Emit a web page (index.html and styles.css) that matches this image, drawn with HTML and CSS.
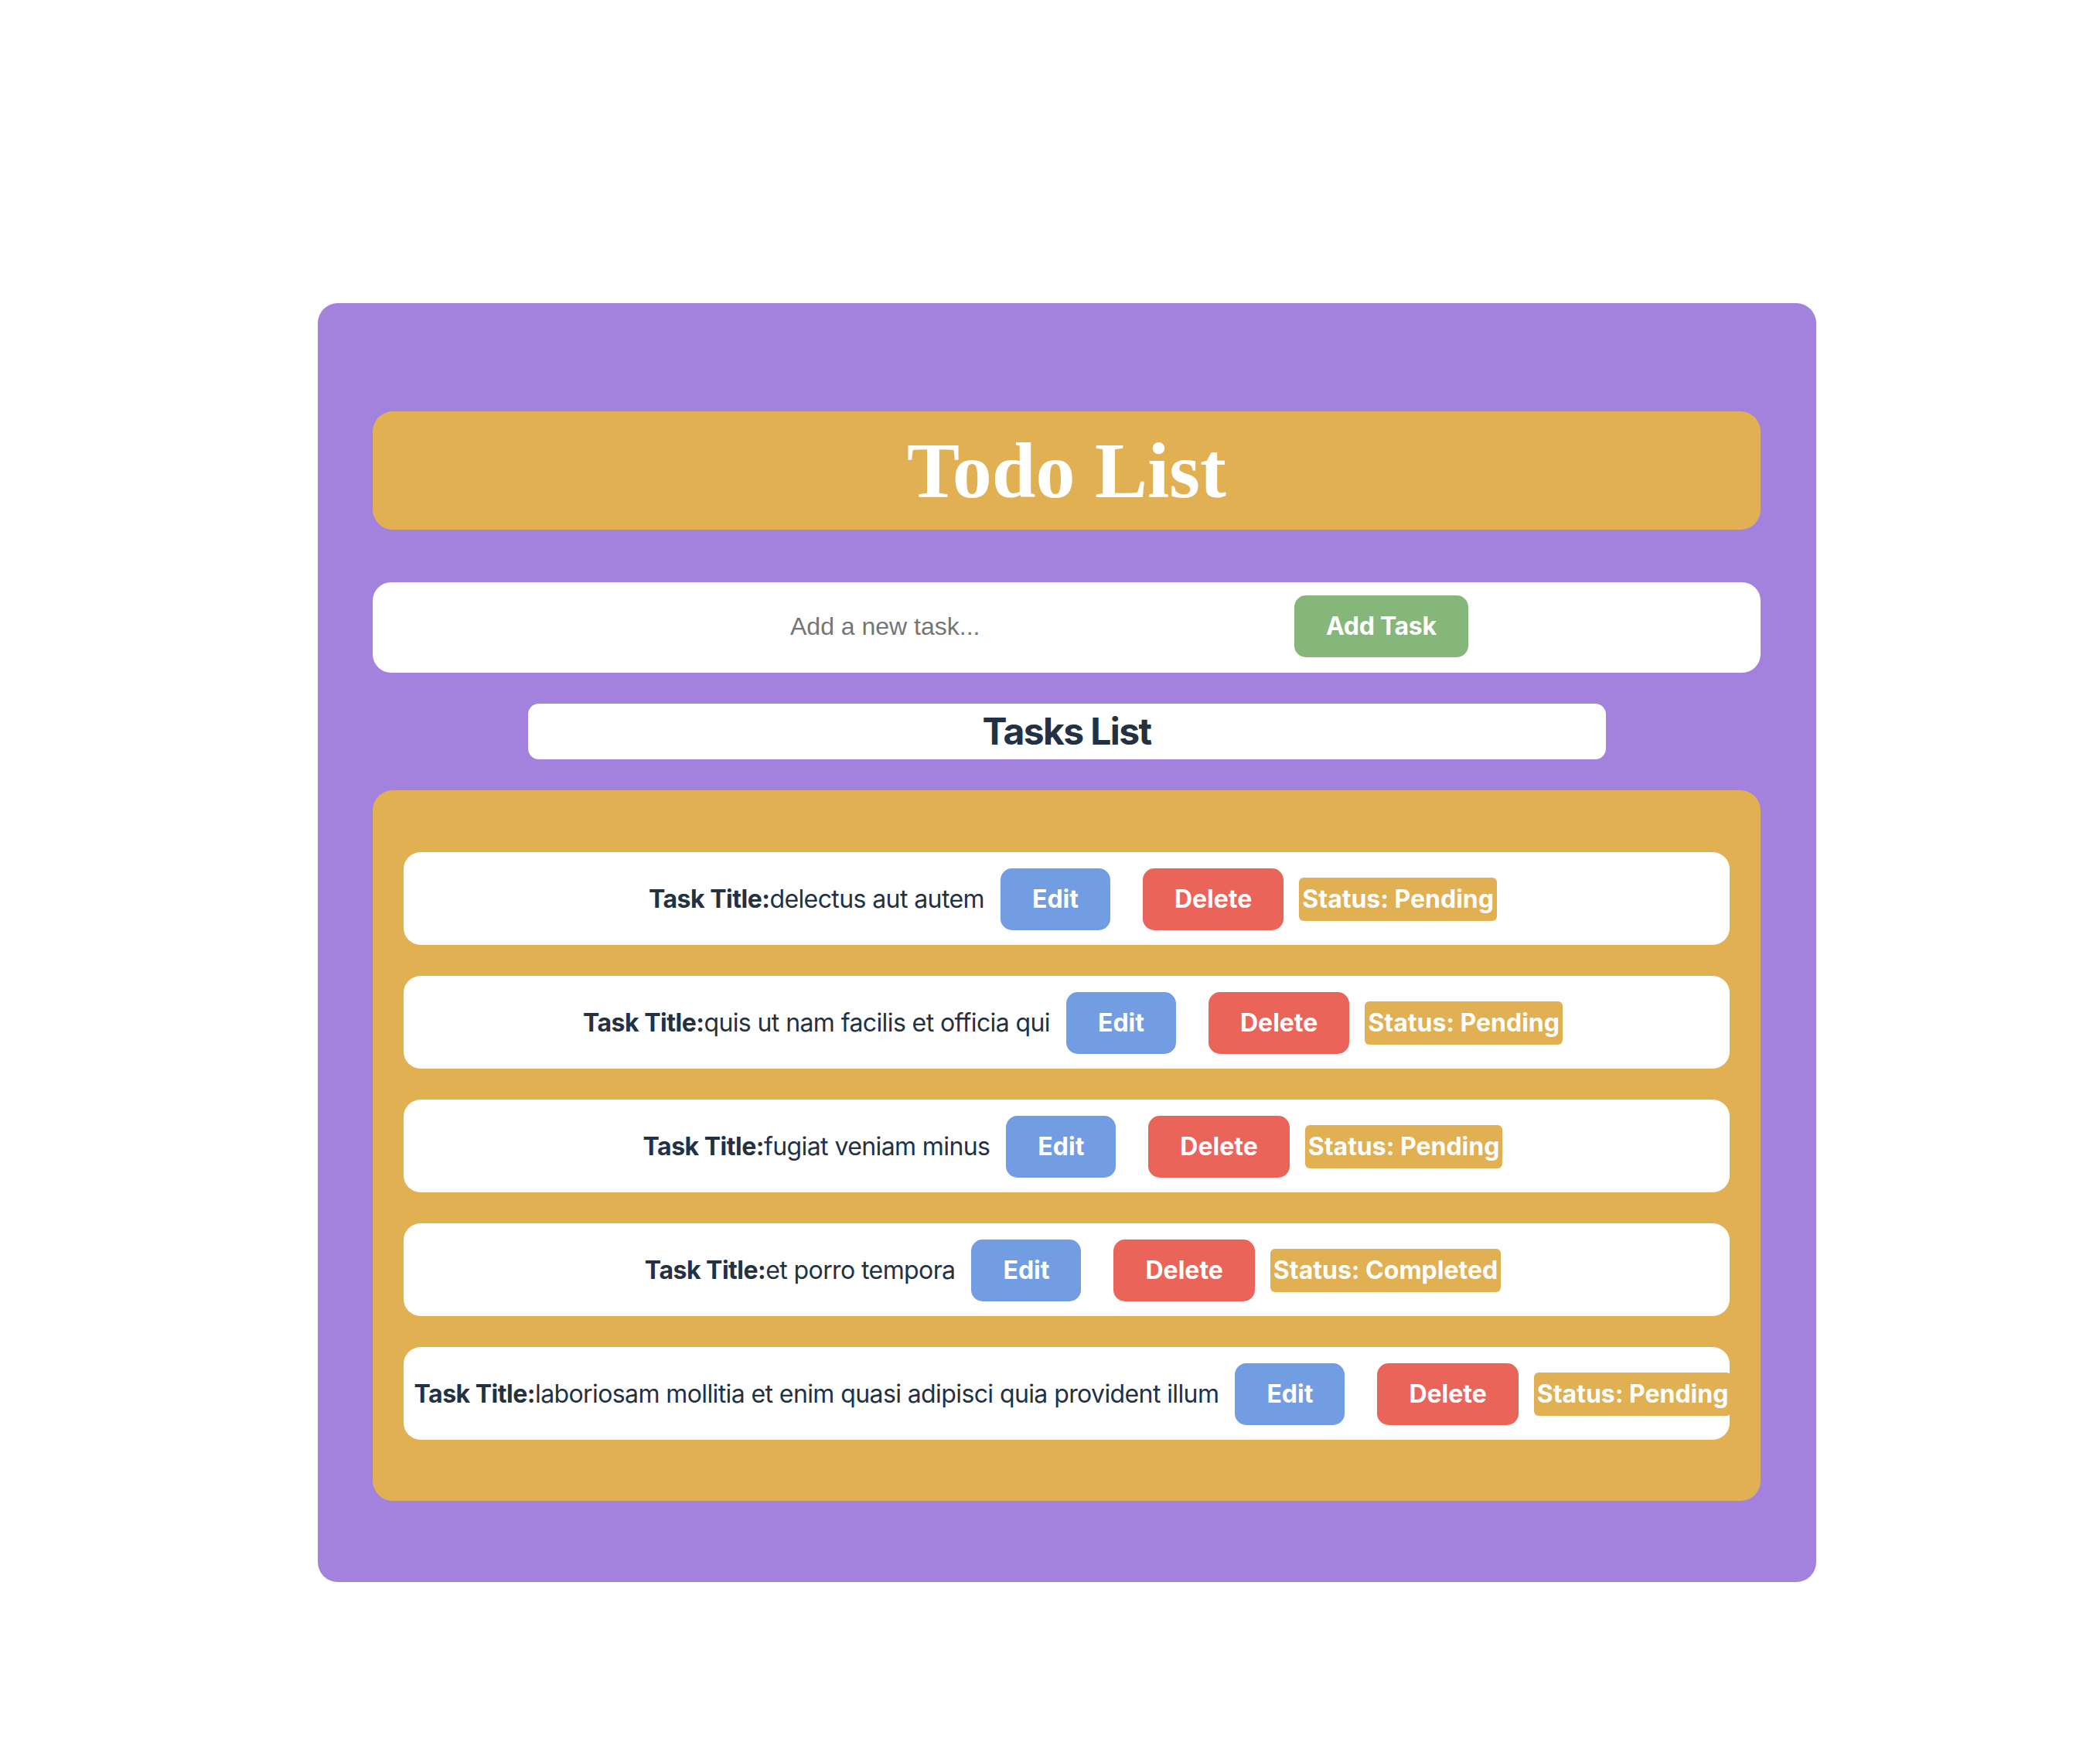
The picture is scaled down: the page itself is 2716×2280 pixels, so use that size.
FILE: index.html
```html
<!DOCTYPE html>
<html lang="en">
<head>
<meta charset="utf-8">
<title>Todo List</title>
<link rel="stylesheet" href="styles.css">
</head>
<body>
<div class="page">
  <main class="app">
    <header class="app-header">
      <h1 class="app-title">Todo List</h1>
    </header>
    <form class="add-row" onsubmit="return false;">
      <input class="add-input" type="text" placeholder="Add a new task...">
      <button class="btn btn-add" type="submit">Add Task</button>
    </form>
    <h2 class="list-heading">Tasks List</h2>
    <section class="task-list">
      <div class="task-row">
        <span class="task-text"><strong>Task Title:</strong>delectus aut autem</span>
        <button class="btn btn-edit">Edit</button>
        <button class="btn btn-delete">Delete</button>
        <span class="status">Status: Pending</span>
      </div>
      <div class="task-row">
        <span class="task-text"><strong>Task Title:</strong>quis ut nam facilis et officia qui</span>
        <button class="btn btn-edit">Edit</button>
        <button class="btn btn-delete">Delete</button>
        <span class="status">Status: Pending</span>
      </div>
      <div class="task-row">
        <span class="task-text"><strong>Task Title:</strong>fugiat veniam minus</span>
        <button class="btn btn-edit">Edit</button>
        <button class="btn btn-delete">Delete</button>
        <span class="status">Status: Pending</span>
      </div>
      <div class="task-row">
        <span class="task-text"><strong>Task Title:</strong>et porro tempora</span>
        <button class="btn btn-edit">Edit</button>
        <button class="btn btn-delete">Delete</button>
        <span class="status">Status: Completed</span>
      </div>
      <div class="task-row">
        <span class="task-text"><strong>Task Title:</strong>laboriosam mollitia et enim quasi adipisci quia provident illum</span>
        <button class="btn btn-edit">Edit</button>
        <button class="btn btn-delete">Delete</button>
        <span class="status">Status: Pending</span>
      </div>
    </section>
  </main>
</div>
</body>
</html>
```

FILE: styles.css
```css
* {
  box-sizing: border-box;
}

html, body {
  margin: 0;
  padding: 0;
  background: #ffffff;
}

body {
  font-family: Inter, "Noto Sans", sans-serif;
  color: #233143;
}

.page {
  display: flex;
  justify-content: center;
  padding: 392px 0 232px 44px;
}

.app {
  width: 1938px;
  background: #a382de;
  border-radius: 26px;
  padding: 140px 72px 105px 71px;
  display: flex;
  flex-direction: column;
  align-items: center;
}

.app-header {
  width: 100%;
  height: 153px;
  background: #e1b053;
  border-radius: 26px;
  display: flex;
  align-items: center;
  justify-content: center;
}

.app-title {
  margin: 0;
  font-family: "Liberation Serif", "Times New Roman", serif;
  font-weight: 700;
  font-size: 102px;
  line-height: 1.15;
  color: #ffffff;
}

.add-row {
  width: 100%;
  height: 117px;
  margin: 68px 0 0;
  background: #ffffff;
  border-radius: 24px;
  display: flex;
  align-items: center;
  padding: 0 0 3px 540px;
}

.add-input {
  flex: 0 0 600px;
  margin-right: 52px;
  border: none;
  outline: none;
  background: transparent;
  padding: 0;
  font-family: "Liberation Sans", Arial, sans-serif;
  font-size: 32px;
  line-height: 40px;
  color: #333;
}

.add-input::placeholder {
  color: #757575;
}

.btn {
  border: none;
  font-family: Inter, "Noto Sans", sans-serif;
  font-weight: 700;
  font-size: 32px;
  line-height: 40px;
  padding: 20px 41px;
  border-radius: 15px;
  color: #ffffff;
  cursor: pointer;
  flex: 0 0 auto;
}

.btn-add {
  background: #86b77a;
  letter-spacing: -0.3px;
}

.list-heading {
  width: 1394px;
  margin: 40px 0 0;
  background: #ffffff;
  border-radius: 14px;
  text-align: center;
  font-size: 48px;
  font-weight: 700;
  line-height: 72px;
  letter-spacing: -1.6px;
  color: #233143;
}

.task-list {
  width: 100%;
  margin-top: 40px;
  background: #e1b053;
  border-radius: 26px;
  padding: 80px 40px 79px 40px;
  display: flex;
  flex-direction: column;
  gap: 40px;
}

.task-row {
  height: 120px;
  background: #ffffff;
  border-radius: 22px;
  display: flex;
  align-items: center;
  justify-content: center;
  padding: 2px 0 0 16px;
  white-space: nowrap;
}

.task-text {
  font-size: 32px;
  line-height: 40px;
  letter-spacing: -0.6px;
  color: #233143;
  flex: 0 0 auto;
}

.task-text strong {
  font-weight: 700;
  letter-spacing: -0.5px;
}

.btn-edit {
  background: #729de2;
  margin-left: 21px;
}

.btn-delete {
  background: #eb645a;
  margin-left: 42px;
}

.status {
  margin-left: 20px;
  flex: 0 0 auto;
  background: #e1b053;
  color: #ffffff;
  font-weight: 700;
  font-size: 32px;
  line-height: 48px;
  padding: 4px 4px;
  border-radius: 6px;
}
```
